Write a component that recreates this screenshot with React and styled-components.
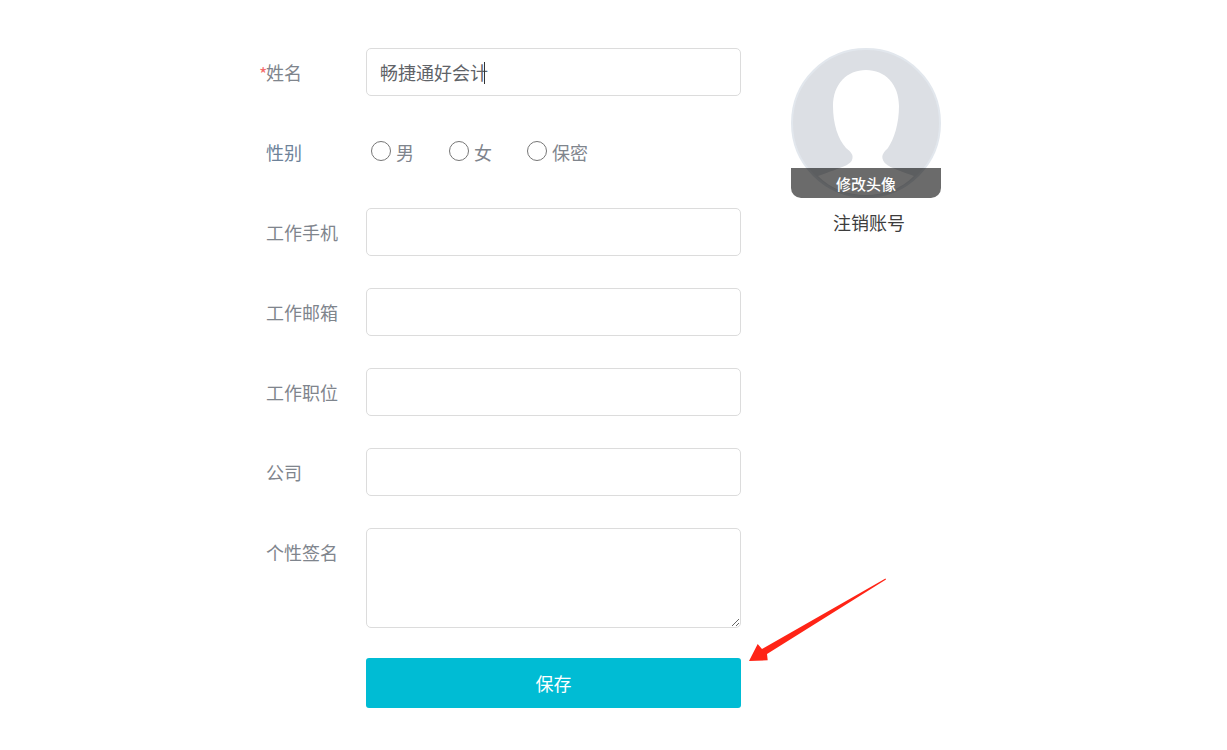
import React from 'react';
import styled, { createGlobalStyle } from 'styled-components';

const GlobalStyle = createGlobalStyle`
    html, body {
        margin: 0;
        padding: 0;
        background: #fff;
    }
    body {
        font-family: "Noto Sans CJK SC", "Liberation Sans", sans-serif;
    }
`;

const Page = styled.div`
    position: relative;
    display: flex;
    align-items: flex-start;
    width: 1227px;
    height: 750px;
    padding: 48px 0 0 259px;
    box-sizing: border-box;
    overflow: hidden;
`;
const Form = styled.form`
    display: flex;
    flex-direction: column;
    width: 482px;
`;
const Row = styled.div`
    display: flex;
    align-items: flex-start;
    margin-bottom: ${props => props.$gap || 32}px;
`;
const Label = styled.label`
    width: 107px;
    padding-left: 7px;
    box-sizing: border-box;
    flex-shrink: 0;
    font-size: 18px;
    line-height: 48px;
    color: ${props => props.$blue ? '#6d8299' : '#7f858d'};
    position: relative;
`;
const Star = styled.span`
    position: absolute;
    left: 0;
    top: 1px;
    color: #f56c6c;
    font-size: 18px;
`;
const FieldWrap = styled.div`
    position: relative;
    width: 375px;
`;
const TextInput = styled.input`
    display: block;
    width: 100%;
    height: 48px;
    padding: 0 13px;
    box-sizing: border-box;
    border: 1px solid #dcdcdc;
    border-radius: 5px;
    outline: none;
    background: #fff;
    font-family: inherit;
    font-size: 18px;
    color: #5f6368;
`;
const Caret = styled.span`
    position: absolute;
    left: 118px;
    top: 14px;
    width: 1px;
    height: 22px;
    background: #333;
`;
const TextArea = styled.textarea`
    display: block;
    width: 100%;
    height: 100px;
    padding: 10px 13px;
    box-sizing: border-box;
    border: 1px solid #dcdcdc;
    border-radius: 5px;
    outline: none;
    background: #fff;
    font-family: inherit;
    font-size: 18px;
`;
const RadioGroup = styled.div`
    display: flex;
    align-items: center;
    height: 48px;
    padding-left: 5px;
`;
const RadioItem = styled.label`
    display: flex;
    align-items: center;
    gap: 5px;
    width: 78px;
    font-size: 18px;
    color: #7f858d;
`;
const Radio = styled.input`
    appearance: none;
    width: 20px;
    height: 20px;
    margin: 0 0 3px;
    border: 1.5px solid #767676;
    border-radius: 50%;
    background: #fff;
    box-sizing: border-box;
`;
const SaveButton = styled.button`
    display: block;
    width: 375px;
    height: 50px;
    margin-left: 107px;
    border: none;
    border-radius: 3px;
    background: #00bcd4;
    color: #fff;
    font-family: inherit;
    font-size: 18px;
`;
const Side = styled.div`
    width: 150px;
    margin-left: 50px;
    display: flex;
    flex-direction: column;
    align-items: center;
`;
const Avatar = styled.div`
    position: relative;
    width: 150px;
    height: 150px;
`;
const AvatarMask = styled.div`
    position: absolute;
    left: 0;
    right: 0;
    bottom: 0;
    height: 30px;
    border-radius: 0 0 10px 10px;
    background: rgba(0, 0, 0, 0.58);
    color: #fff;
    font-size: 15px;
    font-weight: 500;
    line-height: 31px;
    text-align: center;
`;
const Cancel = styled.a`
    margin-top: 11px;
    padding-left: 6px;
    font-size: 18px;
    line-height: 27px;
    color: #3d3d3d;
`;
const ArrowOverlay = styled.svg`
    position: absolute;
    left: 0;
    top: 0;
    pointer-events: none;
`;

const fields = ['工作手机', '工作邮箱', '工作职位', '公司'];
const genders = ['男', '女', '保密'];

const App = () => {
    return (
        <>
        <GlobalStyle />
        <Page>
            <Form>
                <Row>
                    <Label><Star>*</Star>姓名</Label>
                    <FieldWrap>
                        <TextInput defaultValue="畅捷通好会计" />
                        <Caret />
                    </FieldWrap>
                </Row>
                <Row>
                    <Label $blue>性别</Label>
                    <RadioGroup>
                        {genders.map(item => (
                            <RadioItem key={item}>
                                <Radio type="radio" name="gender" />
                                {item}
                            </RadioItem>
                        ))}
                    </RadioGroup>
                </Row>
                {fields.map(item => (
                    <Row key={item}>
                        <Label>{item}</Label>
                        <FieldWrap><TextInput /></FieldWrap>
                    </Row>
                ))}
                <Row $gap={30}>
                    <Label>个性签名</Label>
                    <FieldWrap><TextArea /></FieldWrap>
                </Row>
                <SaveButton type="button">保存</SaveButton>
            </Form>
            <Side>
                <Avatar>
                    <svg width="150" height="150" viewBox="0 0 150 150">
                        <circle cx="75" cy="75" r="74" fill="#dcdfe4" stroke="#e2e7ed" strokeWidth="2" />
                        <path fill="#fff" d="M75 22C56 22 42 36 42 58C42 76 47 91 55 100C60 104 63 107 61 112C59 117 52 119 27 128C40 141 57 147 75 147C93 147 110 141 123 128C100 120 94 117 92 112C90 107 93 104 97 100C103 91 108 76 108 58C108 36 94 22 75 22Z" />
                    </svg>
                    <AvatarMask>修改头像</AvatarMask>
                </Avatar>
                <Cancel>注销账号</Cancel>
            </Side>
            <ArrowOverlay width="1227" height="750" viewBox="0 0 1227 750">
                <path fill="#ff2416" d="M885.5 578.5L886 579.5L767 654L767.7 660.3L749 661L757.7 644L762 649Z" />
            </ArrowOverlay>
        </Page>
        </>
    )
}
export default App;
